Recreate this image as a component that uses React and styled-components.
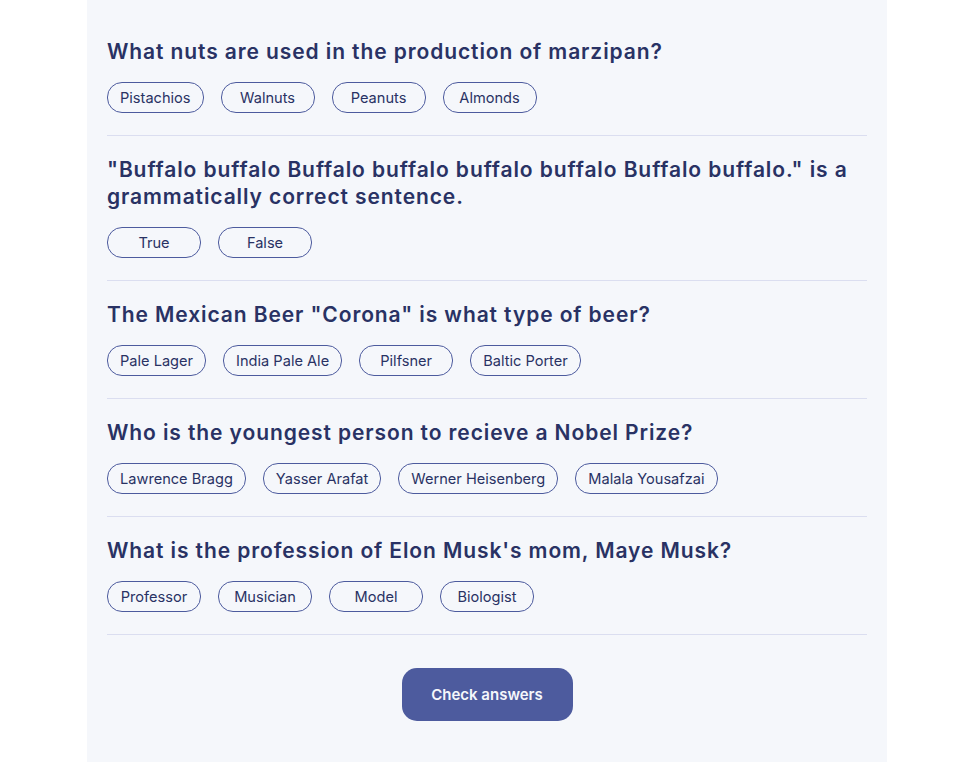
import React from "react";
import styled, { createGlobalStyle } from "styled-components";

const GlobalStyle = createGlobalStyle`
  html, body {
    margin: 0;
    padding: 0;
    background: #ffffff;
  }
  body {
    padding-right: 4px;
    font-family: "Inter", "Liberation Sans", sans-serif;
  }
  * { box-sizing: border-box; }
`;

const Panel = styled.main`
  width: 800px;
  min-height: 100vh;
  margin: 0 auto;
  padding: 18px 20px 40px;
  background: #f5f7fb;
  display: flex;
  flex-direction: column;
`;

const Section = styled.section`
  padding: 20px 0 22px;
  border-bottom: 1px solid #dbdef0;
`;

const Question = styled.h2`
  margin: 0 0 17px;
  font-family: "Inter", "Liberation Sans", sans-serif;
  font-weight: 600;
  font-size: 21px;
  line-height: 27px;
  letter-spacing: 0.9px;
  color: #293264;
`;

const Answers = styled.div`
  display: flex;
  flex-wrap: wrap;
  gap: 17px;
`;

const Answer = styled.button`
  height: 31px;
  min-width: 94px;
  padding: 0 12px;
  border: 1px solid #4d5b9e;
  border-radius: 15px;
  background: transparent;
  color: #293264;
  font-family: "Inter", "Liberation Sans", sans-serif;
  font-size: 14.6px;
  font-weight: 400;
  cursor: pointer;
`;

const CheckButton = styled.button`
  align-self: center;
  margin-top: 33px;
  width: 171px;
  height: 53px;
  border: none;
  border-radius: 15px;
  background: #4d5b9e;
  color: #f5f7fb;
  font-family: "Inter", "Liberation Sans", sans-serif;
  font-size: 15px;
  font-weight: 600;
  cursor: pointer;
`;

const questions = [
  {
    q: "What nuts are used in the production of marzipan?",
    a: ["Pistachios", "Walnuts", "Peanuts", "Almonds"],
  },
  {
    q: '"Buffalo buffalo Buffalo buffalo buffalo buffalo Buffalo buffalo." is a grammatically correct sentence.',
    a: ["True", "False"],
  },
  {
    q: 'The Mexican Beer "Corona" is what type of beer?',
    a: ["Pale Lager", "India Pale Ale", "Pilfsner", "Baltic Porter"],
  },
  {
    q: "Who is the youngest person to recieve a Nobel Prize?",
    a: ["Lawrence Bragg", "Yasser Arafat", "Werner Heisenberg", "Malala Yousafzai"],
  },
  {
    q: "What is the profession of Elon Musk's mom, Maye Musk?",
    a: ["Professor", "Musician", "Model", "Biologist"],
  },
];

export default function App() {
  return (
    <>
      <GlobalStyle />
      <Panel>
        {questions.map((item) => (
          <Section key={item.q}>
            <Question>{item.q}</Question>
            <Answers>
              {item.a.map((ans) => (
                <Answer key={ans}>{ans}</Answer>
              ))}
            </Answers>
          </Section>
        ))}
        <CheckButton>Check answers</CheckButton>
      </Panel>
    </>
  );
}
